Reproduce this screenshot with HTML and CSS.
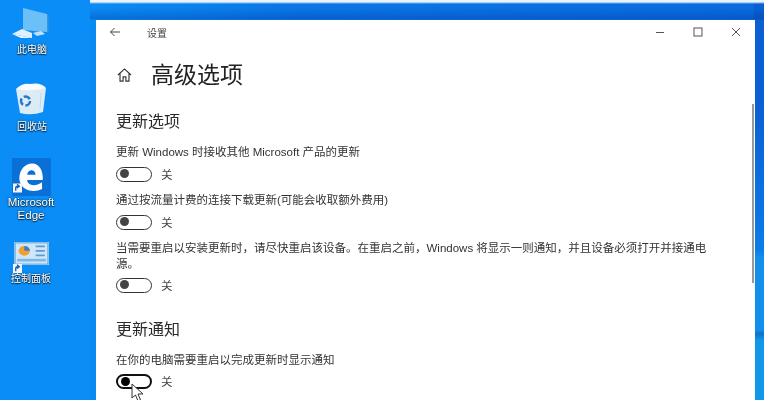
FILE: index.html
```html
<!DOCTYPE html>
<html lang="zh-CN">
<head>
<meta charset="utf-8">
<title>高级选项</title>
<link rel="stylesheet" href="styles.css">
</head>
<body>
<main class="desktop">
  <div class="back-window"></div>
  <div class="desk-icon pc">
    <svg class="ico" width="50" height="36" viewBox="0 0 50 36">
      <path d="M16 1 L40 7 V25 L16 23 Z" fill="#6cc0f8"/>
      <path d="M40 7 L41.500 8 V26 L40 25 Z" fill="#3f95da"/>
      <path d="M28 24 L36 25 L37 28 L28 28 Z" fill="#4b9ddc"/>
      <path d="M5 27 L15 22 L25 26 L25 31 Z" fill="#dff1fd"/>
      <path d="M5 27 L25 31 L14 31 Z" fill="#eef8fe"/>
      <path d="M26 26 L34 24 L38 27 L30 29 Z" fill="#bfe0f8"/>
    </svg>
    <span class="lbl">此电脑</span>
  </div>
  <div class="desk-icon bin">
    <svg class="ico" width="32" height="33" viewBox="0 0 32 33">
      <path d="M1 6 L31 5 L28 29 Q16 33 5 30 Z" fill="#dcecf6"/>
      <path d="M1 6 Q7 0 15 1 Q26 -1 31 5 Q16 9 1 6 Z" fill="#f8fcff"/>
      <path d="M26 10 L25 26" stroke="#c3d9e8" stroke-width="1"/>
      <circle cx="10.500" cy="18" r="4.500" fill="none" stroke="#2a78c8" stroke-width="2.500" stroke-dasharray="7 2.400"/>
    </svg>
    <span class="lbl">回收站</span>
  </div>
  <div class="desk-icon edge">
    <div class="edge-tile">
      <svg width="26" height="30" viewBox="0 0 40 40" preserveAspectRatio="none">
        <path d="M2 22 C2 8 14 1 23 2 C34 3 39 13 38 24 H14 C15 32 27 33 37 27 V36 C24 42 3 38 2 22 Z M14 17 H27 C27 9 15 9 14 17 Z" fill="#fff" fill-rule="evenodd"/>
      </svg>
      <svg class="shortcut" width="9" height="10" viewBox="0 0 10 10">
        <rect width="10" height="10" fill="#f2f6fa"/>
        <path d="M3 8 V5 Q3 3 6 3 M4.500 1 L7 3 L4.500 5" fill="none" stroke="#1f5fb0" stroke-width="1.500"/>
      </svg>
    </div>
    <span class="lbl latin">Microsoft<br>Edge</span>
  </div>
  <div class="desk-icon panel">
    <div class="panel-tile">
      <svg width="35" height="23" viewBox="0 0 34 26" preserveAspectRatio="none">
        <rect width="34" height="26" fill="#cfe6f8"/>
        <rect x="1" y="1" width="32" height="24" fill="none" stroke="#4d9ad8"/>
        <circle cx="10" cy="10" r="5.500" fill="#f0a030"/>
        <path d="M10 10 V4.500 A5.500 5.500 0 0 1 15.500 10 Z" fill="#3a7fc8"/>
        <path d="M21 5 H30 M21 10 H30 M21 15 H30" stroke="#5a9bd6" stroke-width="2"/>
        <rect x="3" y="19" width="28" height="3" fill="#7db7e6"/>
      </svg>
      <svg class="shortcut" width="9" height="9" viewBox="0 0 10 10">
        <rect width="10" height="10" fill="#f2f6fa"/>
        <path d="M3 8 V5 Q3 3 6 3 M4.500 1 L7 3 L4.500 5" fill="none" stroke="#1f5fb0" stroke-width="1.500"/>
      </svg>
    </div>
    <span class="lbl">控制面板</span>
  </div>

  <section class="window">
    <header class="titlebar">
      <svg class="back" width="12" height="10" viewBox="0 0 12 10"><path d="M11 5 H1.500 M5.500 1 L1.500 5 L5.500 9" fill="none" stroke="#444" stroke-width="1"/></svg>
      <span class="app">设置</span>
      <div class="controls">
        <svg width="10" height="10" viewBox="0 0 10 10"><path d="M1 5.500 H9" stroke="#555" stroke-width="1"/></svg>
        <svg width="10" height="10" viewBox="0 0 10 10"><rect x="1" y="1" width="8" height="8" fill="none" stroke="#555" stroke-width="1"/></svg>
        <svg width="10" height="10" viewBox="0 0 10 10"><path d="M1 1 L9 9 M9 1 L1 9" stroke="#555" stroke-width="1"/></svg>
      </div>
    </header>
    <div class="content">
      <div class="page-head">
        <svg class="home" width="15" height="14" viewBox="0 0 16 15"><path d="M1 7.500 L8 1 L15 7.500 M3.200 6 V14 H6.500 V9.500 H9.500 V14 H12.800 V6" fill="none" stroke="#333" stroke-width="1.200"/></svg>
        <h1>高级选项</h1>
      </div>
      <h2 class="sec-first">更新选项</h2>
      <p class="opt">更新 Windows 时接收其他 Microsoft 产品的更新</p>
      <div class="toggle-row"><span class="toggle"></span><span class="state">关</span></div>
      <p class="opt">通过按流量计费的连接下载更新(可能会收取额外费用)</p>
      <div class="toggle-row"><span class="toggle"></span><span class="state">关</span></div>
      <p class="opt wrap">当需要重启以安装更新时，请尽快重启该设备。在重启之前，Windows 将显示一则通知，并且设备必须打开并接通电源。</p>
      <div class="toggle-row"><span class="toggle"></span><span class="state">关</span></div>
      <h2>更新通知</h2>
      <p class="opt">在你的电脑需要重启以完成更新时显示通知</p>
      <div class="toggle-row last"><span class="toggle active"></span><span class="state">关</span></div>
    </div>
    <div class="scroll"></div>
    <svg class="cursor" width="13" height="19" viewBox="0 0 13 19"><path d="M1 1 V15 L4.500 12 L7 18 L9.500 17 L7 11 H12 Z" fill="#fff" stroke="#333" stroke-width="1"/></svg>
  </section>
</main>
</body>
</html>
```
FILE: styles.css
```css
* { box-sizing: border-box; }
html, body { margin: 0; padding: 0; }
body {
  width: 764px;
  height: 400px;
  overflow: hidden;
  font-family: "Noto Sans CJK SC", "Liberation Sans", sans-serif;
}
.desktop {
  position: relative;
  width: 764px;
  height: 400px;
  overflow: hidden;
  background: #0a8df6;
}
.back-window {
  position: absolute;
  left: 90px;
  top: 0;
  width: 674px;
  height: 400px;
  background:
    linear-gradient(180deg, #eef6fd 0, #e4f1fc 2px, rgba(255,255,255,0) 4px),
    linear-gradient(180deg, rgba(0,40,130,0) 8px, rgba(0,40,130,.28) 19px, rgba(0,40,130,0) 20px),
    linear-gradient(180deg, #0a60d2 0, #0a60d2 100px, #0b72e2 200px, #0c7ce8 250px, #108fec 258px, #108fec 330px, #0b72c8 334px, #1296ea 340px, #1298e8 400px) right top / 10px 100% no-repeat,
    linear-gradient(90deg, #0a8bf4 0, #0a76e8 30%, #0a6ae0 100%);
}
.desk-icon {
  position: absolute;
  width: 64px;
  display: flex;
  flex-direction: column;
  align-items: center;
  color: #fff;
  filter: blur(0.4px);
}
.lbl {
  font-size: 10px;
  line-height: 12px;
  text-align: center;
  text-shadow: 0 0 2px #123, 0 1px 1px #123;
  font-family: "Noto Sans CJK SC", "Liberation Sans", sans-serif;
}
.lbl.latin {
  font-family: "Liberation Sans", sans-serif;
  font-size: 11.500px;
  line-height: 13px;
}
.pc { left: 0; top: 7px; }
.bin { left: 0; top: 83px; }
.bin .ico { margin: 0 3px 4px 0; }
.edge { left: -1px; top: 158px; }
.panel { left: -1px; top: 240px; }
.edge-tile {
  position: relative;
  display: flex;
  align-items: center;
  justify-content: center;
  width: 39px;
  height: 38px;
  background: #0a70d6;
}
.panel-tile {
  position: relative;
  display: flex;
  align-items: flex-end;
  width: 35px;
  height: 23px;
  margin: 2px 0 7px;
}
.shortcut { position: absolute; }
.edge-tile .shortcut { left: 1px; bottom: 3px; }
.panel-tile .shortcut { left: -1px; bottom: -8px; }
.window {
  position: absolute;
  left: 96px;
  top: 20px;
  width: 659px;
  height: 380px;
  background: #fff;
  color: #222;
}
.titlebar {
  display: flex;
  align-items: center;
  height: 24px;
  padding-left: 13px;
  filter: blur(0.3px);
}
.back { margin-right: 26px; }
.app { font-size: 10px; color: #444; }
.controls {
  margin-left: auto;
  display: flex;
  gap: 28px;
  padding-right: 14px;
}
.content { padding: 0 0 0 20px; filter: blur(0.4px); }
.page-head {
  display: flex;
  align-items: center;
  height: 32px;
  margin-top: 13px;
}
.home { margin: 4px 19px 0 1px; }
h1 {
  margin: 0;
  font-size: 23px;
  font-weight: 400;
  line-height: 32px;
  color: #222;
}
h2 {
  margin: 22px 0 13px;
  font-size: 16px;
  line-height: 22px;
  font-weight: 400;
  color: #2a2a2a;
}
h2.sec-first { margin: 20px 0 13px; }
.opt {
  margin: 0 0 4px;
  font-size: 11.500px;
  line-height: 16px;
  color: #333;
  font-family: "Liberation Sans", "Noto Sans CJK SC", sans-serif;
  max-width: 600px;
}
.wrap { margin-bottom: 3px; }
.toggle-row {
  display: flex;
  align-items: center;
  height: 20px;
  margin-bottom: 8px;
}
.toggle-row.last { margin-top: -1px; }
.toggle {
  position: relative;
  width: 36px;
  height: 15px;
  border: 1.500px solid #333;
  border-radius: 8px;
  margin-right: 9px;
}
.toggle::before {
  content: "";
  position: absolute;
  left: 3px;
  top: 1.500px;
  width: 9px;
  height: 9px;
  border-radius: 50%;
  background: #444;
}
.toggle.active { border-color: #111; border-width: 2px; }
.toggle.active::before { background: #000; left: 2.500px; top: 1px; }
.state { font-size: 11.500px; color: #444; }
.scroll {
  position: absolute;
  right: 1px;
  top: 84px;
  width: 2px;
  height: 179px;
  background: #9a9a9a;
}
.cursor { position: absolute; left: 35px; top: 363px; filter: blur(0.3px); }
```
